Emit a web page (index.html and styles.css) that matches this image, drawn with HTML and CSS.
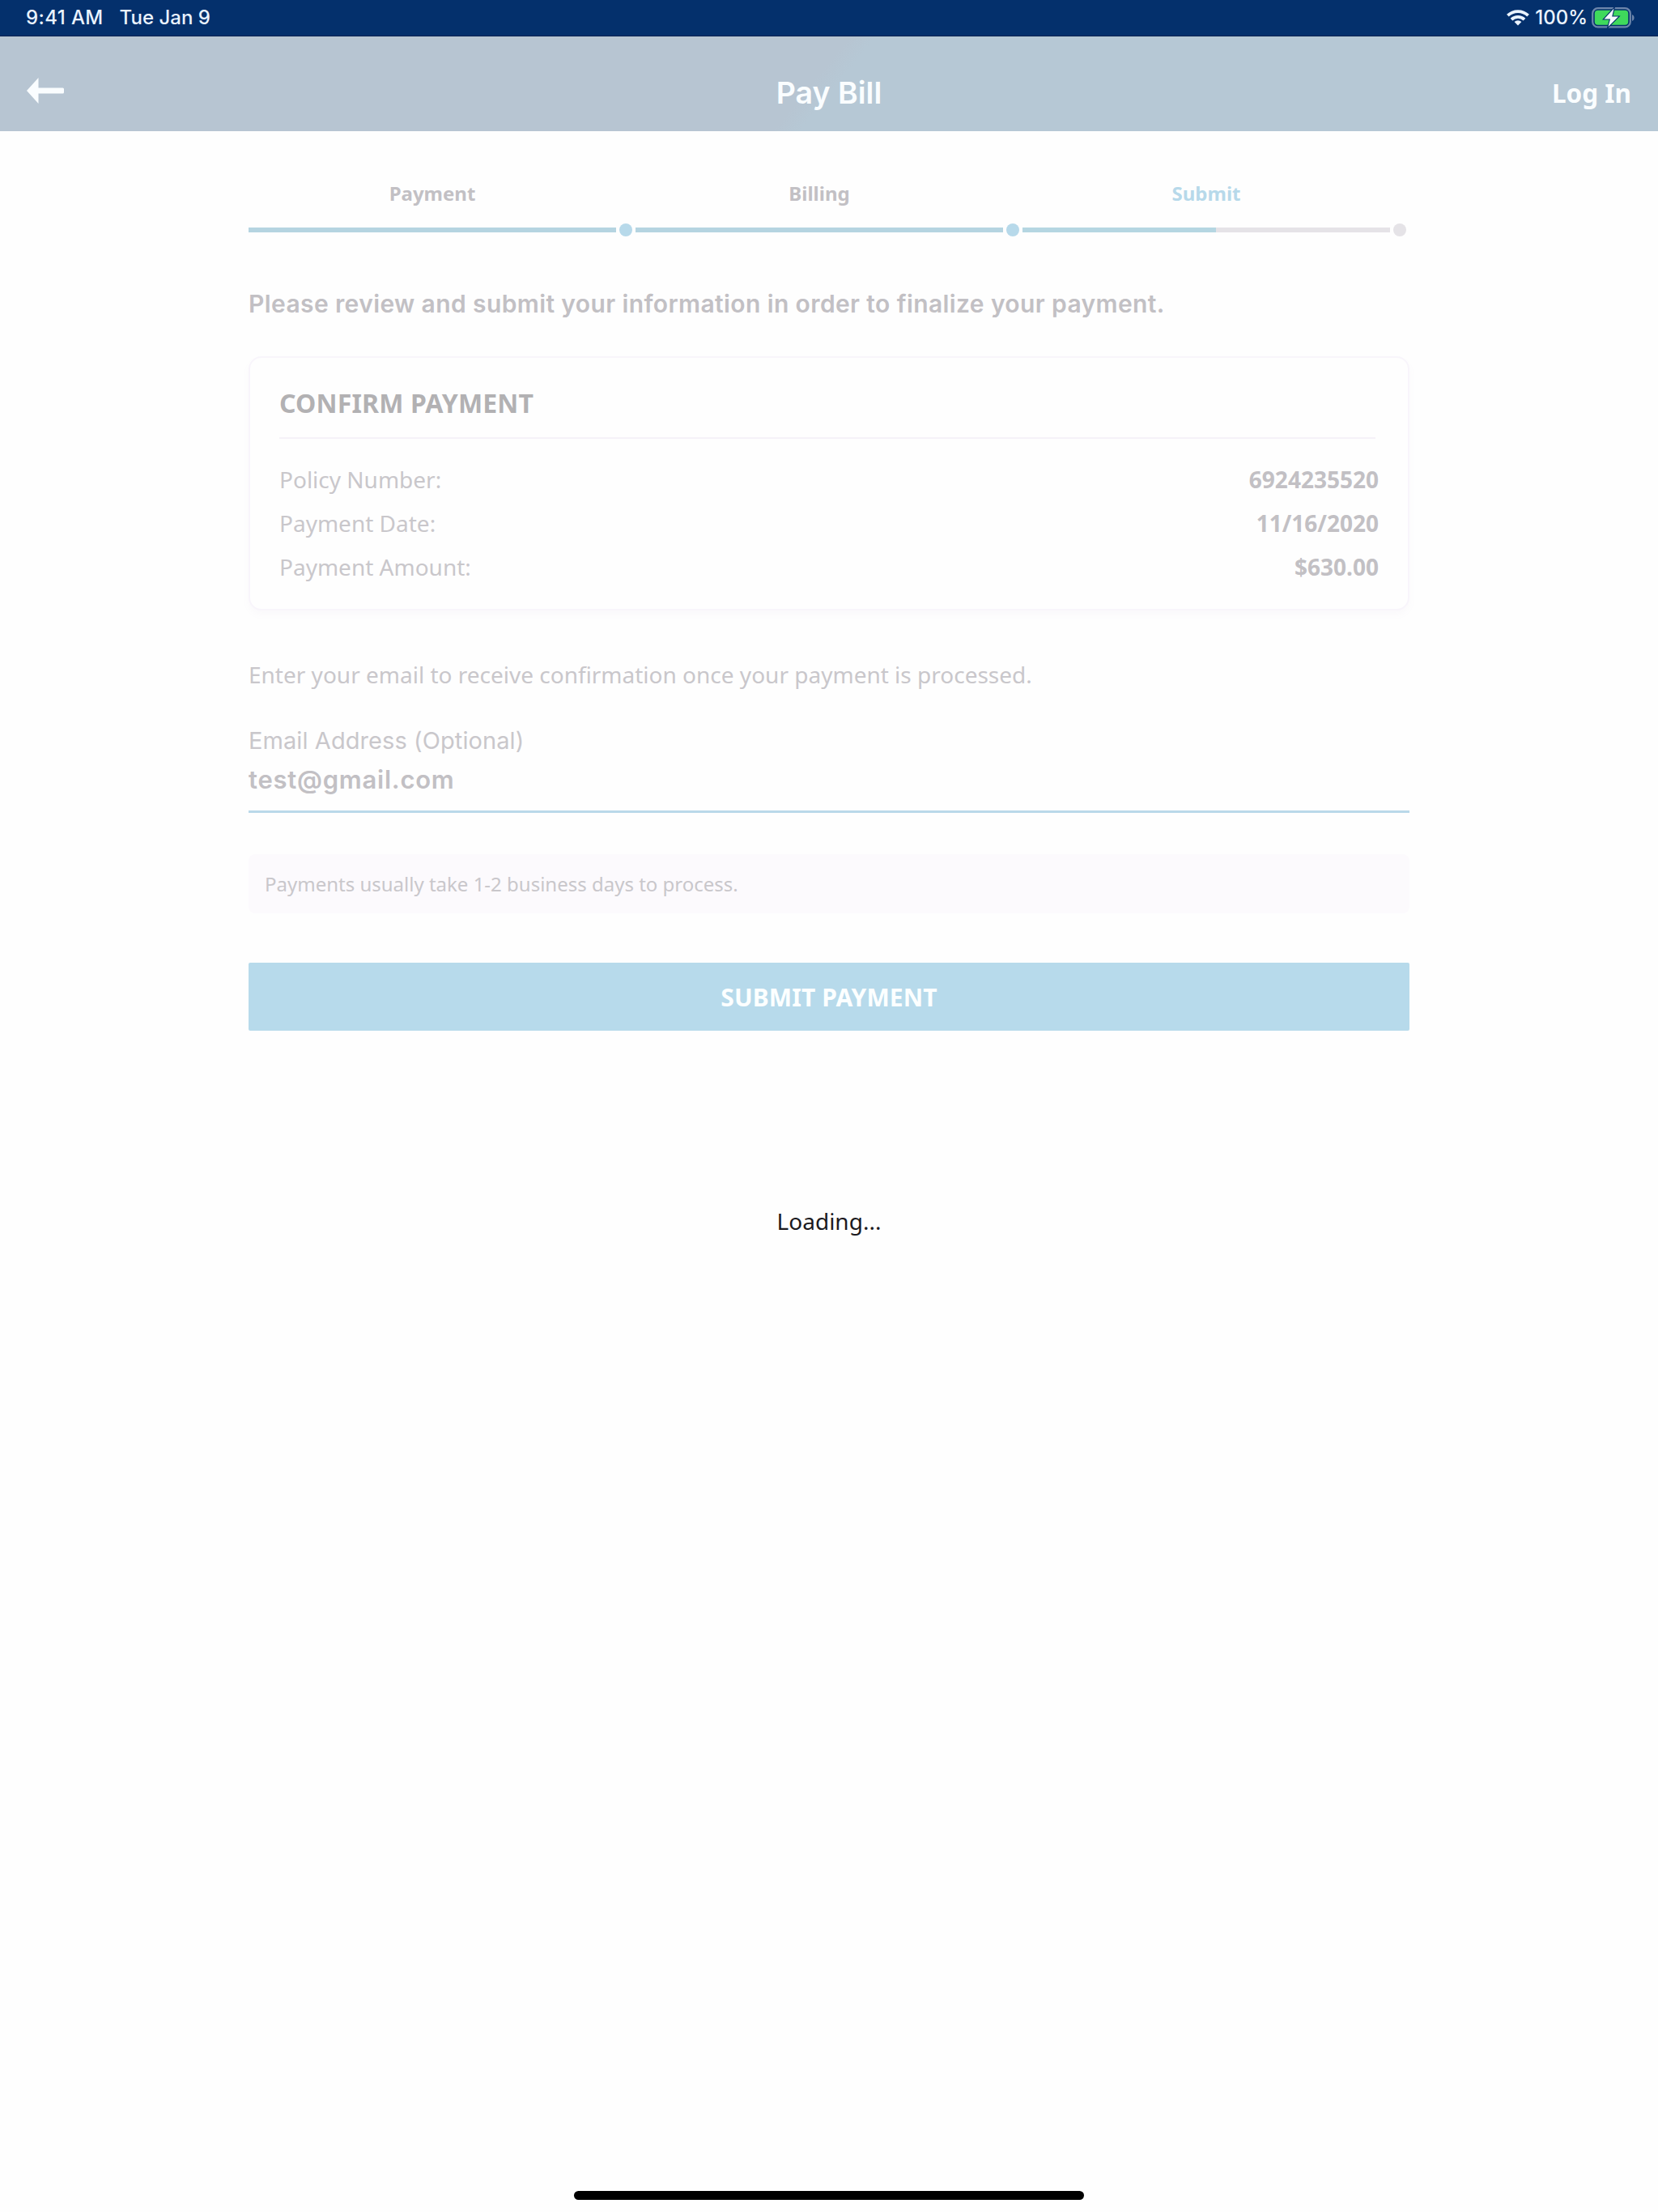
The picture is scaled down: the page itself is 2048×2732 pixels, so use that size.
FILE: index.html
```html
<!DOCTYPE html>
<html lang="en">
<head>
<meta charset="utf-8">
<title>Pay Bill</title>
<link rel="stylesheet" href="styles.css">
</head>
<body>
<div class="screen">
  <div class="status-bar">
    <span class="status-time">9:41 AM</span>
    <span class="status-date">Tue Jan 9</span>
    <div class="status-right">
      <svg class="wifi" viewBox="0 0 28 21" width="28" height="21">
        <g fill="none" stroke="currentColor" stroke-width="3.8">
          <path d="M1.4 8.2a18 18 0 0 1 25.2 0"/>
          <path d="M6 13.1a11.5 11.5 0 0 1 16 0"/>
        </g>
        <path fill="currentColor" d="M14 20.6l-4.4-4.5a6.2 6.2 0 0 1 8.8 0z"/>
      </svg>
      <span class="status-percent">100%</span>
      <svg class="battery" viewBox="0 0 54 26" width="54" height="26">
        <rect x="1.2" y="1.2" width="46.6" height="23.2" rx="6.5" fill="none" stroke="#6d86ab" stroke-width="2.2"/>
        <path d="M50 9v8c3.4-1.2 3.4-6.800 0-8z" fill="#6d86ab"/>
        <rect x="3.800" y="3.800" width="41.400" height="18" rx="4" fill="#3fd95c"/>
        <path d="M27.500 1.500L15.500 14.500h7.500l-2.500 9.500L33 11.500h-7.800z" fill="#f6fbff" stroke="#04306c" stroke-width="2.200" paint-order="stroke"/>
      </svg>
    </div>
  </div>

  <header class="nav">
    <svg class="back" viewBox="0 0 46 32" width="46" height="32">
      <path d="M0 16L14.500 0v12.500H44.500a1.500 1.500 0 0 1 1.500 1.500v4a1.500 1.500 0 0 1-1.500 1.500H14.500V32z" fill="#fafdff"/>
    </svg>
    <h1 class="nav-title">Pay Bill</h1>
    <a class="nav-login">Log In</a>
  </header>

  <main class="content">
    <div class="steps">
      <div class="step">
        <span class="step-label">Payment</span>
        <span class="step-line step-line-done"></span>
        <span class="step-dot step-dot-done"></span>
      </div>
      <div class="step">
        <span class="step-label">Billing</span>
        <span class="step-line step-line-done"></span>
        <span class="step-dot step-dot-done"></span>
      </div>
      <div class="step">
        <span class="step-label step-label-active">Submit</span>
        <span class="step-line step-line-half"></span>
        <span class="step-dot"></span>
      </div>
    </div>

    <h2 class="lead">Please review and submit your information in order to finalize your payment.</h2>

    <section class="card">
      <h3 class="card-title">CONFIRM PAYMENT</h3>
      <div class="card-rule"></div>
      <div class="row"><span class="row-name">Policy Number:</span><span class="row-value">6924235520</span></div>
      <div class="row"><span class="row-name">Payment Date:</span><span class="row-value">11/16/2020</span></div>
      <div class="row"><span class="row-name">Payment Amount:</span><span class="row-value">$630.00</span></div>
    </section>

    <p class="prompt"><span>Enter your email to receive confirmation once your payment is processed.</span></p>

    <div class="field">
      <div class="field-label"><span>Email Address (Optional)</span></div>
      <div class="field-value"><span>test@gmail.com</span></div>
    </div>

    <div class="notice"><span>Payments usually take 1-2 business days to process.</span></div>

    <div class="submit"><span>SUBMIT PAYMENT</span></div>
  </main>

  <div class="loading">Loading...</div>
  <div class="home-indicator"></div>
</div>
</body>
</html>
```
FILE: styles.css
```css
* {
  box-sizing: border-box;
}

body {
  margin: 0;
  font-family: "Noto Sans", sans-serif;
  background: #fefefe;
}

h1, h2, h3, p {
  margin: 0;
}

.screen {
  position: relative;
  width: 2048px;
  height: 2732px;
  overflow: hidden;
  white-space: nowrap;
}

/* Status bar */
.status-bar {
  display: flex;
  align-items: center;
  height: 45px;
  padding: 0 28px 1px 32px;
  background: #04306c;
  border-bottom: 1px solid #03204f;
  color: #eaf3ff;
  font: 500 24px/42px Inter, sans-serif;
}

.status-time {
  letter-spacing: 0.4px;
}

.status-date {
  margin-left: 20px;
}

.status-right {
  display: flex;
  align-items: center;
  margin-left: auto;
}

.status-percent {
  margin: 0 5px 0 7px;
}

/* Navigation */
.nav {
  display: grid;
  grid-template-columns: 1fr auto 1fr;
  align-items: center;
  height: 117px;
  padding: 0 33px 0 33px;
  background: linear-gradient(129deg, #b7c5d2 49%, #b6c8d5 50.5%);
  color: #fafdff;
}

.back {
  margin-top: 16px;
}

.nav-title {
  padding-top: 23px;
  font: 600 37.5px/48px Inter, sans-serif;
}

.nav-login {
  justify-self: end;
  padding-top: 23px;
  font-size: 31.5px;
  font-weight: 700;
  line-height: 48px;
}

/* Page body */
.content {
  width: 1434px;
  margin: 61px 0 0 307px;
  color: #c2c0c4;
}

.steps {
  display: grid;
  grid-template-columns: repeat(3, 1fr);
}

.step {
  display: grid;
  grid-template-columns: 454px 16px;
  column-gap: 4px;
  row-gap: 21px;
  align-items: center;
}

.step-label {
  grid-column: 1 / -1;
  width: 454px;
  text-align: center;
  font-size: 24px;
  font-weight: 700;
  line-height: 32px;
}

.step-label-active {
  color: #b7d9ea;
}

.step-line {
  height: 6px;
}

.step-line-done {
  background: #b5d4e1;
}

.step-line-half {
  background: linear-gradient(90deg, #b5d6e2 239px, #e5e3e7 239px);
}

.step-dot {
  height: 16px;
  border-radius: 50%;
  background: #e5e3e7;
}

.step-dot-done {
  background: #b7d9ea;
}

.lead {
  margin-top: 63px;
  font: 600 30px/40px Inter, sans-serif;
  letter-spacing: 0.39px;
}

.card {
  height: 314px;
  margin-top: 45px;
  padding: 34px 36px 0;
  border: 2px solid #f8f5fb;
  border-radius: 16px;
  background: #fefefe;
  box-shadow: 0 5px 8px rgba(150, 120, 180, 0.04);
}

.card-title {
  color: #b2b1b3;
  font-size: 32px;
  font-weight: 700;
  line-height: 44px;
  letter-spacing: 0.15px;
}

.card-rule {
  height: 2px;
  margin: 20px 4px 23px 0;
  background: #f5f2f8;
}

.row {
  display: flex;
  justify-content: space-between;
  color: #c9c7cb;
  font-size: 28px;
  line-height: 54px;
}

.row-value {
  color: #c2c0c4;
  font-weight: 700;
}

.prompt {
  margin-top: 59px;
  color: #c9c7cb;
  font-size: 28px;
  line-height: 40px;
}

.field {
  margin-top: 42px;
  padding-bottom: 14px;
  border-bottom: 3px solid #bad9e9;
  font-family: Inter, sans-serif;
}

.field-label {
  color: #c9c7cb;
  font-size: 29px;
  line-height: 40px;
  letter-spacing: 0.08px;
}

.field-value {
  margin-top: 4px;
  font-size: 31px;
  font-weight: 600;
  line-height: 48px;
  letter-spacing: 0.75px;
}

.notice {
  height: 73px;
  margin-top: 51px;
  padding-left: 20px;
  border-radius: 8px;
  background: #fcfafd;
  color: #c9c7cb;
  font-size: 24px;
  line-height: 73px;
}

.submit {
  height: 84px;
  margin-top: 61px;
  padding-top: 2px;
  border-radius: 2px;
  background: #b7daeb;
  color: #fcffff;
  font-size: 30px;
  font-weight: 700;
  line-height: 82px;
  letter-spacing: 0.1px;
  text-align: center;
}

/* Overlays */
.loading {
  position: absolute;
  top: 1488px;
  left: 0;
  width: 100%;
  color: #1c1a1e;
  font-size: 28px;
  line-height: 40px;
  text-align: center;
}

.home-indicator {
  position: absolute;
  left: 709px;
  bottom: 15px;
  width: 630px;
  height: 11px;
  border-radius: 6px;
  background: #000;
}
```
